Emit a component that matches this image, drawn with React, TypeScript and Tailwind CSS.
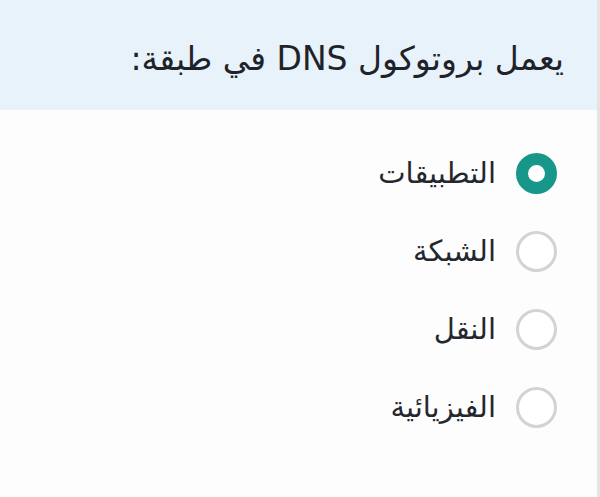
import React from 'react';

const options = ['التطبيقات', 'الشبكة', 'النقل', 'الفيزيائية'];

const App: React.FC = () => {
  const selected = 0;

  return (
    <div className="w-[600px] h-[497px] flex bg-[#fdfdfd] overflow-hidden" style={{ fontFamily: '"DejaVu Sans", "Noto Sans", sans-serif' }}>
      <div dir="rtl" className="flex-1 flex flex-col">
        {/* Question */}
        <div className="h-[110px] bg-[#e7f2fb] flex items-center pr-[33px] pt-[6px]">
          <h2 className="text-[33px] text-[#1e2329] leading-none">يعمل بروتوكول DNS في طبقة:</h2>
        </div>

        {/* Options */}
        <ul className="mt-[24px] pr-[40px]">
          {options.map((label, i) => (
            <li key={label} className="h-[78px] flex items-center gap-[20px]">
              {i === selected ? (
                <span className="w-[41px] h-[41px] rounded-full border-[12px] border-[#17978a] bg-white shrink-0" />
              ) : (
                <span className="w-[41px] h-[41px] rounded-full border-[3px] border-[#d3d3d3] bg-white shrink-0" />
              )}
              <span className="text-[29px] text-[#24282d] leading-none">{label}</span>
            </li>
          ))}
        </ul>
      </div>
      <div className="w-[3px] bg-[#e4e4e4]" />
    </div>
  );
};

export default App;
